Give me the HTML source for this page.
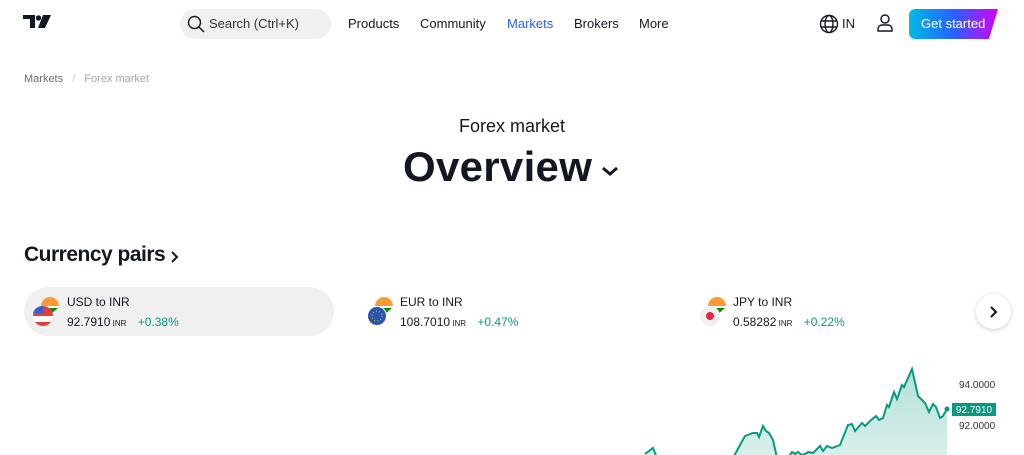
<!DOCTYPE html>
<html><head><meta charset="utf-8"><style>
*{margin:0;padding:0;box-sizing:border-box}
body{width:1024px;height:455px;overflow:hidden;background:#fff;font-family:"Liberation Sans",sans-serif;color:#131722;position:relative}
.a{position:absolute}
.nav{font-size:13px;top:16px}
</style></head><body>
<svg class="a" style="left:23px;top:15px" width="28" height="13" viewBox="0 0 28 13"><path d="M0 0h12v13H7V4H0z" fill="#131722"/><circle cx="15.5" cy="3" r="2.7" fill="#131722"/><path d="M20 0h8l-6 13h-7z" fill="#131722"/></svg>
<div class="a" style="left:180px;top:9px;width:151px;height:30px;border-radius:15px;background:#f0f0f0"></div>
<svg class="a" style="left:187px;top:15px" width="18" height="18" viewBox="0 0 18 18"><circle cx="7.5" cy="7.5" r="6" fill="none" stroke="#131722" stroke-width="1.4"/><path d="M12 12l5 5" stroke="#131722" stroke-width="1.4"/></svg>
<div class="a nav" style="left:209px;color:#333">Search (Ctrl+K)</div>
<div class="a nav" style="left:348px">Products</div>
<div class="a nav" style="left:420px">Community</div>
<div class="a nav" style="left:507px;color:#2962ff">Markets</div>
<div class="a nav" style="left:574px">Brokers</div>
<div class="a nav" style="left:639px">More</div>
<svg class="a" style="left:819px;top:14px" width="20" height="20" viewBox="0 0 20 20" fill="none" stroke="#131722" stroke-width="1.4"><circle cx="10" cy="10" r="8.5"/><ellipse cx="10" cy="10" rx="4" ry="8.5"/><path d="M2 7h16M2 13h16"/></svg>
<div class="a nav" style="left:842px">IN</div>
<svg class="a" style="left:876px;top:13px" width="18" height="20" viewBox="0 0 18 20" fill="none" stroke="#131722" stroke-width="1.4"><circle cx="9" cy="6" r="4"/><path d="M2 18v-2a4 4 0 0 1 4-4h6a4 4 0 0 1 4 4v2z"/></svg>
<svg class="a" style="left:909px;top:9px" width="89" height="30"><defs><linearGradient id="g" x1="0" x2="1"><stop offset="0" stop-color="#00bce5"/><stop offset="0.5" stop-color="#2962ff"/><stop offset="1" stop-color="#d500f9"/></linearGradient></defs><path d="M6 0H89L80 30H6a6 6 0 0 1-6-6V6a6 6 0 0 1 6-6z" fill="url(#g)"/></svg>
<div class="a nav" style="left:921px;color:#fff">Get started</div>
<div class="a" style="left:24px;top:73px;font-size:11px;color:#6a6d78">Markets <span style="color:#ccc;margin:0 6px">/</span> <span style="color:#a3a6af">Forex market</span></div>
<div class="a" style="left:0;width:1024px;top:116px;text-align:center;font-size:18px">Forex market</div>
<div class="a" style="left:403px;top:143px;font-size:42px;font-weight:bold;letter-spacing:0.3px">Overview</div>
<svg class="a" style="left:601px;top:166px" width="18" height="10"><path d="M2 2l7 6 7-6" fill="none" stroke="#131722" stroke-width="3"/></svg>
<div class="a" style="left:24px;top:243px;font-size:21px;font-weight:bold;letter-spacing:-0.5px">Currency pairs</div>
<svg class="a" style="left:170px;top:250px" width="10" height="14"><path d="M2 2l5 5-5 5" fill="none" stroke="#131722" stroke-width="2"/></svg>
<div class="a" style="left:24px;top:287px;width:310px;height:49px;border-radius:25px;background:#f0f0f0"></div>
<svg class="a" style="left:32px;top:296px" width="30" height="32"><circle cx="18" cy="10" r="9" fill="#fff"/><path d="M9 10a9 9 0 0 1 18 0z" fill="#ff9933"/><path d="M18 19l8-7H10z" fill="#138808"/><circle cx="11" cy="20" r="10" fill="#fff"/><path d="M1 20a10 10 0 0 1 20 0v0zM3 26h16a10 10 0 0 1-16 0z" fill="#e23b3b"/><path d="M1 17h10v-7a10 10 0 0 0-10 7z" fill="#3c5cc8"/></svg>
<div class="a" style="left:67px;top:295px;font-size:12px">USD to INR</div>
<div class="a" style="left:67px;top:315px;font-size:12px">92.7910<span style="font-size:8px"> INR</span> <span style="color:#089981;margin-left:8px">+0.38%</span></div>
<svg class="a" style="left:366px;top:296px" width="30" height="32"><path d="M9 10a9 9 0 0 1 18 0z" fill="#ff9933"/><path d="M18 19l8-7H10z" fill="#138808"/><circle cx="11" cy="20" r="10" fill="#fff"/><circle cx="11" cy="20" r="9" fill="#2855b0"/><circle cx="11" cy="20" r="5" fill="none" stroke="#ffcc00" stroke-dasharray="1 2.2"/></svg>
<div class="a" style="left:400px;top:295px;font-size:12px">EUR to INR</div>
<div class="a" style="left:400px;top:315px;font-size:12px">108.7010<span style="font-size:8px"> INR</span> <span style="color:#089981;margin-left:8px">+0.47%</span></div>
<svg class="a" style="left:699px;top:296px" width="30" height="32"><path d="M9 10a9 9 0 0 1 18 0z" fill="#ff9933"/><path d="M18 19l8-7H10z" fill="#138808"/><circle cx="11" cy="20" r="10" fill="#f0f0f0"/><circle cx="11" cy="20" r="4" fill="#e0283c"/></svg>
<div class="a" style="left:733px;top:295px;font-size:12px">JPY to INR</div>
<div class="a" style="left:733px;top:315px;font-size:12px">0.58282<span style="font-size:8px"> INR</span> <span style="color:#089981;margin-left:8px">+0.22%</span></div>
<div class="a" style="left:976px;top:294px;width:35px;height:35px;border-radius:50%;background:#fff;box-shadow:0 1px 5px rgba(0,0,0,.2)"></div>
<svg class="a" style="left:989px;top:305px" width="10" height="14"><path d="M2 2l5 5-5 5" fill="none" stroke="#131722" stroke-width="2"/></svg>
<svg class="a" style="left:0;top:0" width="1024" height="455">
<defs><linearGradient id="f" x1="0" y1="0" x2="0" y2="1"><stop offset="0" stop-color="#089981" stop-opacity=".3"/><stop offset="1" stop-color="#089981" stop-opacity=".15"/></linearGradient></defs>
<path d="M645,454 653,448 657,458 733,458 740,445 745,436 753,433 757,433 759,437 763,426 766,431 769,433 773,440 777,458 788,458 792,452 795,454 798,452 802,455 807,453 808,452 813,453 820,446 823,451 827,446 832,448 840,445 848,425 852,424 855,431 862,423 865,426 870,421 876,416 879,420 883,418 887,405 889,407 894,392 897,399 902,385 904,387 912,369 918,396 925,403 929,412 933,404 936,407 940,418 943,416 947,409 V458 H645z" fill="url(#f)"/>
<path d="M645,454 653,448 657,458 M733,458 740,445 745,436 753,433 757,433 759,437 763,426 766,431 769,433 773,440 777,458 M788,458 792,452 795,454 798,452 802,455 807,453 808,452 813,453 820,446 823,451 827,446 832,448 840,445 848,425 852,424 855,431 862,423 865,426 870,421 876,416 879,420 883,418 887,405 889,407 894,392 897,399 902,385 904,387 912,369 918,396 925,403 929,412 933,404 936,407 940,418 943,416 947,409" fill="none" stroke="#089981" stroke-width="2"/>
<circle cx="947" cy="409" r="2.5" fill="#089981"/>
<rect x="952" y="403" width="44" height="13" fill="#089981"/>
<text x="974" y="413" font-size="10" fill="#fff" text-anchor="middle" font-family="Liberation Sans">92.7910</text>
<text x="959" y="388" font-size="10" fill="#333" font-family="Liberation Sans">94.0000</text>
<text x="959" y="429" font-size="10" fill="#333" font-family="Liberation Sans">92.0000</text>
</svg>
</body></html>
